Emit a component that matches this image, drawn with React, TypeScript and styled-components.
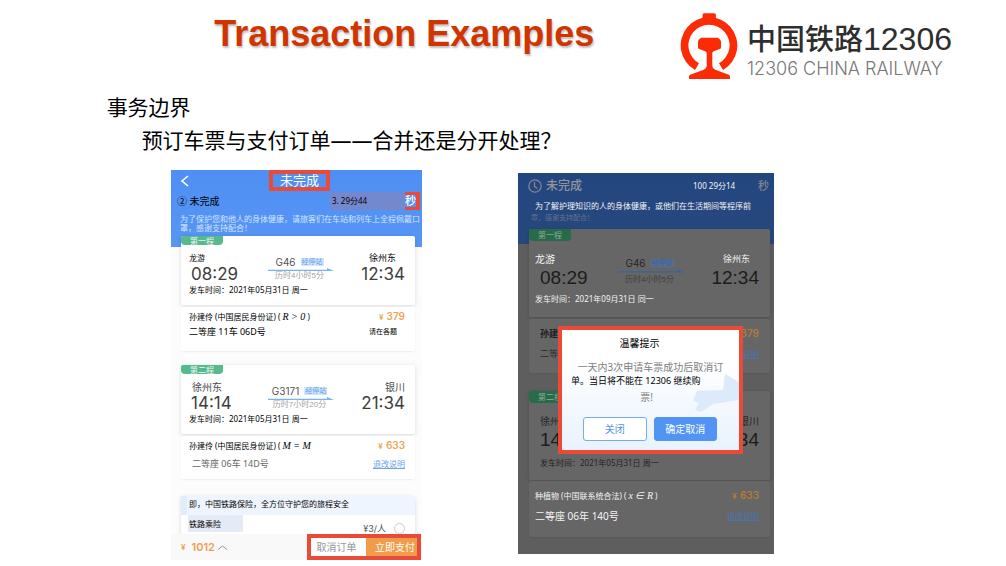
import React from "react";
import styled, { createGlobalStyle, css } from "styled-components";

const UI = `"Noto Sans", "Noto Sans CJK SC", sans-serif`;
const ARIAL = `"Liberation Sans", "Noto Sans CJK SC", sans-serif`;
const WIDE = `Inter, "Noto Sans CJK SC", sans-serif`;
const RED = "#e94b38";

const GlobalStyle = createGlobalStyle`
  *, *::before, *::after { box-sizing: border-box; }
  body { margin: 0; background: #fff; color: #000; font-family: ${UI}; }
  h1, h2, p, figure { margin: 0; font-size: inherit; font-weight: 400; }
  button { margin: 0; padding: 0; border: 0; background: none; font: inherit; color: inherit; white-space: nowrap; cursor: pointer; }
`;

/* ---------- slide ---------- */

const Slide = styled.main`
  width: 100%;
  overflow: hidden;
`;

const Header = styled.header`
  display: grid;
  grid-template-columns: minmax(0, 680fr) minmax(0, 326fr);
  align-items: start;
  padding-top: 12px;
`;

const Title = styled.h1`
  && { font-size: 36px; font-weight: 700; }
  padding-left: 31.5%;
  font-family: ${ARIAL};
  line-height: 44px;
  color: #d03400;
  text-shadow: 1px 2px 2px rgba(0, 0, 0, 0.25);
  white-space: nowrap;
`;

const Logo = styled.div`
  display: flex;
  gap: 9px;
`;

const LogoText = styled.div`
  padding-top: 6px;
  white-space: nowrap;
`;

const LogoName = styled.div`
  display: flex;
  align-items: baseline;
  font-family: ${ARIAL};
  font-size: 32px;
  line-height: 38px;
  color: #2e2e2e;
`;

const LogoHan = styled.span`
  font-family: "Noto Sans CJK SC", sans-serif;
  font-size: 29px;
  font-weight: 500;
`;

const LogoSub = styled.div`
  font-family: ${WIDE};
  font-size: 18px;
  font-weight: 300;
  line-height: 22px;
  color: #777;
`;

const Topic = styled.section`
  padding: 11px 0 0 10.6%;
  font-size: 21px;
  line-height: 33px;
`;

const SubTopic = styled.p`
  padding-left: 35px;
`;

const Figures = styled.section`
  display: grid;
  grid-template-columns: minmax(0, 171fr) minmax(0, 251fr) minmax(0, 96fr) minmax(0, 256fr) minmax(0, 232fr);
  align-items: start;
  padding-top: 13px;
`;

/* ---------- phone ---------- */

const Phone = styled.figure<{ $dim?: boolean }>`
  position: relative;
  grid-column: ${(p) => (p.$dim ? 4 : 2)};
  && { font-size: 8px; }
  white-space: nowrap;
  ${(p) =>
    p.$dim
      ? css`
          && { margin-top: 3px; }
          padding-bottom: 17px;
          color: #f4f4f4;
          background: linear-gradient(#24467f 0, #27487e 71px, #5e5e5e 71px);
        `
      : css`
          background: linear-gradient(#4f8ff3 0, #5796f4 77px, #fcfcfc 77px);
        `}
`;

const NavBar = styled.div`
  display: grid;
  grid-template-columns: 98px auto 1fr;
  align-items: center;
  color: #fff;
`;

const BackButton = styled.button`
  && { padding-left: 9px; }
  display: flex;
`;

const NavTitle = styled.div`
  padding: 0 7px;
  border: 4px solid ${RED};
  font-size: 13px;
  line-height: 13px;
`;

const StatusRow = styled.div<{ $dim?: boolean }>`
  display: flex;
  align-items: center;
  line-height: 18px;
  padding: ${(p) => (p.$dim ? "4px 5px 0 10px" : "1px 2px 0 6px")};
`;

const StatusName = styled.span<{ $dim?: boolean }>`
  flex: 1;
  display: flex;
  align-items: center;
  gap: 4px;
  font-size: ${(p) => (p.$dim ? 12 : 10)}px;
  font-weight: ${(p) => (p.$dim ? 500 : 400)};
  color: ${(p) => (p.$dim ? "#92959b" : "#000")};
`;

const Timer = styled.span<{ $dim?: boolean }>`
  width: 75px;
  padding-left: ${(p) => (p.$dim ? 10 : 2)}px;
  background: ${(p) => (p.$dim ? "none" : "#7388cd")};
`;

const Second = styled.span<{ $dim?: boolean }>`
  font-size: 11px;
  font-weight: 500;
  ${(p) =>
    p.$dim
      ? css`color: #81858d;`
      : css`
          border: solid ${RED};
          border-width: 3px 4px 3px 0;
          line-height: 12px;
          color: #fff;
        `}
`;

const Notice = styled.p`
  && { margin: 4px 0; }
  padding-left: 9px;
  line-height: 9px;
  color: #d3e4fd;
`;

const DimNotice = styled.p`
  padding: 5px 0 0 17px;
  line-height: 12px;
`;

const DimNoticeRest = styled.p`
  && { margin-bottom: 6px; font-size: 7px; }
  padding-left: 13px;
  line-height: 11px;
  color: #62718e;
`;

const Card = styled.section<{ $dim?: boolean; $top?: number }>`
  margin: ${(p) => p.$top ?? 0}px ${(p) => (p.$dim ? "4px 0 11px" : "7px 0 10px")};
  border-radius: 2px;
  background: ${(p) => (p.$dim ? "#666" : "#fff")};
  box-shadow: 0 1px 4px ${(p) => (p.$dim ? "rgba(0,0,0,.18)" : "rgba(0,0,0,.14)")};
`;

const Badge = styled.div<{ $dim?: boolean }>`
  width: 42px;
  border-radius: 2px 0 4px 4px;
  text-align: center;
  line-height: ${(p) => (p.$dim ? 12 : 9)}px;
  background: ${(p) => (p.$dim ? "#286b49" : "#57b98d")};
  color: ${(p) => (p.$dim ? "#8fa79b" : "#eefaf4")};
`;

const Route = styled.div<{ $dim?: boolean }>`
  display: grid;
  grid-template-columns: 1fr auto 1fr;
  padding: ${(p) => (p.$dim ? "12px 11px 0 6px" : "7px 10px 0 8px")};
`;

const Stop = styled.div<{ $end?: boolean }>`
  grid-column: ${(p) => (p.$end ? 3 : 1)};
  text-align: ${(p) => (p.$end ? "right" : "left")};
`;

const Station = styled.div<{ $size: number; $color?: string; $inset?: number; $end?: boolean }>`
  padding: 0 ${(p) => (p.$end ? p.$inset ?? 0 : 0)}px 0 ${(p) => (p.$end ? 0 : p.$inset ?? 0)}px;
  font-size: ${(p) => p.$size}px;
  line-height: 12px;
  color: ${(p) => p.$color ?? "inherit"};
`;

const Time = styled.time<{ $dim?: boolean; $end?: boolean }>`
  display: block;
  ${(p) =>
    p.$dim
      ? css`
          padding: 2px 0 0 ${p.$end ? 0 : 5}px;
          font-family: ${ARIAL};
          font-size: 19px;
          line-height: 22px;
          color: #1c1c1c;
        `
      : css`
          padding-left: ${p.$end ? 0 : 2}px;
          font-family: ${WIDE};
          font-size: 17px;
          line-height: 20px;
          color: #3e3e3e;
        `}
`;

const Train = styled.div`
  padding: 4px 0 0 5px;
  text-align: center;
`;

const TrainNo = styled.div<{ $dim?: boolean }>`
  display: flex;
  align-items: center;
  justify-content: center;
  gap: 5px;
  font-family: ${WIDE};
  font-size: 10px;
  line-height: 12px;
  color: ${(p) => (p.$dim ? "#262626" : "#555")};
`;

const Via = styled.a<{ $dim?: boolean }>`
  padding: 0 1px;
  font-size: 7px;
  line-height: 8px;
  text-decoration: none;
  color: ${(p) => (p.$dim ? "#2f62ad" : "#5c9de9")};
  background: ${(p) => (p.$dim ? "#5b6f8c" : "#d3e7fb")};
`;

const Arrow = styled.svg`
  display: block;
  margin-left: 3px;
`;

const Duration = styled.div<{ $dim?: boolean }>`
  font-family: ${ARIAL};
  line-height: ${(p) => (p.$dim ? 14 : 10)}px;
  color: ${(p) => (p.$dim ? "#404040" : "#a3a3a3")};
`;

const Departure = styled.p<{ $dim?: boolean; $dark?: boolean }>`
  line-height: 12px;
  padding: ${(p) => (p.$dim ? (p.$dark ? "6px 0 11px 11px" : "4px 0 12px 6px") : "0 0 9px 8px")};
  color: ${(p) => (p.$dark ? "#232323" : "inherit")};
`;

const Passenger = styled(Card)<{ $gap: number; $bottom: number }>`
  display: grid;
  row-gap: ${(p) => p.$gap}px;
  padding: ${(p) => (p.$dim ? 7 : 3)}px ${(p) => (p.$dim ? 11 : 10)}px ${(p) => p.$bottom}px ${(p) => (p.$dim ? 6 : 8)}px;
  box-shadow: 0 1px 2px rgba(0, 0, 0, 0.06);
`;

const Line = styled.div<{ $dim?: boolean }>`
  display: flex;
  align-items: center;
  justify-content: space-between;
  line-height: ${(p) => (p.$dim ? 14 : 12)}px;
`;

const Label = styled.span<{ $size?: number; $color?: string; $inset?: number; $bold?: boolean }>`
  padding: 0 ${(p) => p.$inset ?? 0}px;
  font-size: ${(p) => p.$size ?? 8}px;
  font-weight: ${(p) => (p.$bold ? 700 : 400)};
  color: ${(p) => p.$color ?? "inherit"};
`;

const Formula = styled.i`
  font-family: "Liberation Serif", serif;
  font-size: 10px;
`;

const Price = styled.span<{ $dim?: boolean }>`
  font-family: ${WIDE};
  font-size: 10px;
  font-weight: 600;
  color: ${(p) => (p.$dim ? "#b37d38" : "#f0a457")};
`;

const Yen = styled.span`
  margin-right: 3px;
  font-size: 8px;
`;

const RuleLink = styled.a<{ $dim?: boolean }>`
  color: ${(p) => (p.$dim ? "#4874b4" : "#6ba3ec")};
`;

const InsuranceHead = styled.p`
  padding: 0 0 4px 2px;
  border-left: 6px solid #e0edfd;
  line-height: 15px;
  background: #eff5fe;
`;

const InsuranceRow = styled.label`
  display: flex;
  align-items: flex-end;
  min-height: 19px;
  padding: 0 10px 0 7px;
`;

const InsuranceName = styled.span`
  align-self: flex-start;
  width: 55px;
  margin-right: auto;
  padding-left: 1px;
  line-height: 17px;
  background: #e5ebf6;
`;

const InsurancePrice = styled.span`
  margin-right: 8px;
  font-family: ${WIDE};
  font-size: 9px;
  line-height: 10px;
  color: #555;
`;

const Round = styled.input`
  appearance: none;
  width: 11px;
  height: 11px;
  margin: 0;
  border: 1px solid #ccc;
  border-radius: 50%;
`;

const PayBar = styled.div`
  position: relative;
  display: flex;
  align-items: center;
  padding: 0 1px 0 10px;
  background: #f9f9f9;
`;

const Total = styled.span`
  display: flex;
  align-items: center;
  gap: 3px;
  margin-right: auto;
  font-family: ${WIDE};
  font-size: 11px;
  font-weight: 600;
  color: #f0a050;
`;

const Actions = styled.div`
  display: flex;
  width: 114px;
  border: 4px solid ${RED};
  font-size: 10px;
`;

const CancelButton = styled.button`
  && { padding-right: 4px; line-height: 18px; color: #999; background: #fdfdfd; }
  flex: 1;
`;

const PayButton = styled.button`
  && { padding-left: 7px; line-height: 18px; color: #fff; background: #f09c4a; }
  width: 51px;
`;

/* ---------- dialog over the dimmed phone ---------- */

const Dialog = styled.div`
  position: absolute;
  top: 153px;
  left: 40px;
  right: 31px;
  padding: 6px 9px 9px;
  border: 4px solid ${RED};
  background: linear-gradient(#fff 25%, #e9f2fd);
  color: #808080;
  font-size: 10px;
  text-align: center;
`;

const DialogTitle = styled.h2`
  && { margin-bottom: 10px; }
  padding-right: 22px;
  line-height: 14px;
  color: #000;
`;

const DialogText = styled.p<{ $right?: number }>`
  padding-right: ${(p) => p.$right ?? 0}px;
  line-height: 14px;
`;

const DialogStrong = styled.p`
  && { margin-bottom: 3px; font-size: 9px; }
  line-height: 13px;
  text-align: left;
  color: #000;
`;

const DialogButtons = styled.div`
  display: flex;
  justify-content: center;
  gap: 7px;
  padding: 13px 13px 0 12px;
`;

const DialogButton = styled.button<{ $primary?: boolean }>`
  && {
    flex: 1;
    border: 1px solid ${(p) => (p.$primary ? "#5294f4" : "#78acf0")};
    border-radius: 3px;
    line-height: 22px;
    color: ${(p) => (p.$primary ? "#fff" : "#5294e8")};
    background: ${(p) => (p.$primary ? "#5294f4" : "#fff")};
  }
`;

const TrainArt = styled.svg`
  position: absolute;
  right: -9px;
  bottom: 29px;
  z-index: -1;
`;

const DialogLayer = styled.div`
  position: relative;
  z-index: 0;
`;

function RailMark() {
  return (
    <svg width="58" height="67" viewBox="0 0 58 67" aria-hidden="true">
      <g fill="#fa2b05">
        <path d="M22.500 7V3q0-1.700 1.700-1.700h10q1.700 0 1.700 1.700v4z" />
        <path d="M15 58A28.300 28.300 0 1 1 43 58L39 51.300A20.600 20.600 0 1 0 19 51.300z" />
        <path d="M21 25.700h17q3 2 3 3.800v6q0 1.200-1.200 1.600l-6 2.200q-1.500.6-1.500 2V54q0 2.500 3 3.700l13.500 5.100q1.200.5 1.200 2V67H9v-2.200q0-1.500 1.200-2l13.500-5.100q3-1.200 3-3.700V41.300q0-1.400-1.500-2l-6-2.200q-1.200-.4-1.200-1.600v-6q0-1.800 3-3.800z" />
      </g>
    </svg>
  );
}

function LineArrow({ dim }: { dim?: boolean }) {
  return (
    <Arrow width="66" height={dim ? 4 : 3} viewBox="0 0 66 3" aria-hidden="true">
      <path d="M0 1.700H59V0L66 3H0z" fill={dim ? "#3763a3" : "#7ab1f3"} />
    </Arrow>
  );
}

interface LegProps {
  dim?: boolean;
  top?: number;
  badge: string;
  from: React.ReactNode;
  to: React.ReactNode;
  start: string;
  end: string;
  train?: string;
  duration?: string;
  departure: string;
  darkDeparture?: boolean;
}

function Leg(p: LegProps) {
  return (
    <Card $dim={p.dim} $top={p.top}>
      <Badge $dim={p.dim}>{p.badge}</Badge>
      <Route $dim={p.dim}>
        <Stop>
          {p.from}
          <Time $dim={p.dim}>{p.start}</Time>
        </Stop>
        {p.train && (
          <Train>
            <TrainNo $dim={p.dim}>
              {p.train}
              <Via href="#stops" $dim={p.dim}>经停站</Via>
            </TrainNo>
            <LineArrow dim={p.dim} />
            <Duration $dim={p.dim}>{p.duration}</Duration>
          </Train>
        )}
        <Stop $end>
          {p.to}
          <Time $dim={p.dim} $end>{p.end}</Time>
        </Stop>
      </Route>
      <Departure $dim={p.dim} $dark={p.darkDeparture}>{p.departure}</Departure>
    </Card>
  );
}

function Fare({ amount, dim }: { amount: string; dim?: boolean }) {
  return (
    <Price $dim={dim}>
      <Yen>¥</Yen>
      {amount}
    </Price>
  );
}

function OrderPhone() {
  return (
    <Phone>
      <NavBar>
        <BackButton aria-label="返回">
          <svg width="9" height="12" viewBox="0 0 9 12" fill="none" stroke="#fff" strokeWidth="1.600">
            <path d="M8 1 2 6l6 5" />
          </svg>
        </BackButton>
        <NavTitle>未完成</NavTitle>
      </NavBar>
      <StatusRow>
        <StatusName>② 未完成</StatusName>
        <Timer>3. 29分44</Timer>
        <Second>秒</Second>
      </StatusRow>
      <Notice>
        为了保护您和他人的身体健康，请旅客们在车站和列车上全程佩戴口
        <br />
        罩，感谢支持配合！
      </Notice>
      <Leg
        badge="第一程"
        from={<Station $size={8}>龙游</Station>}
        to={<Station $size={9} $end $inset={9}>徐州东</Station>}
        start="08:29"
        end="12:34"
        train="G46"
        duration="历时4小时5分"
        departure="发车时间：2021年05月31日 周一"
      />
      <Passenger $top={2} $gap={3} $bottom={13}>
        <Line>
          <Label>孙建伶 (中国居民身份证) ( <Formula>R &gt; 0</Formula> )</Label>
          <Fare amount="379" />
        </Line>
        <Line>
          <Label $size={9}>二等座 11车 06D号</Label>
          <Label $size={7} $inset={8}>请在各题</Label>
        </Line>
      </Passenger>
      <Leg
        top={14}
        badge="第二程"
        from={<Station $size={10} $color="#4a4a4a" $inset={3}>徐州东</Station>}
        to={<Station $size={10} $color="#4a4a4a" $end>银川</Station>}
        start="14:14"
        end="21:34"
        train="G3171"
        duration="历时7小时20分"
        departure="发车时间：2021年05月31日 周一"
      />
      <Passenger $top={2} $gap={6} $bottom={9}>
        <Line>
          <Label>孙建伶 (中国居民身份证) ( <Formula>M = M</Formula></Label>
          <Fare amount="633" />
        </Line>
        <Line>
          <Label $size={9} $color="#666" $inset={3}>二等座 06车 14D号</Label>
          <RuleLink href="#rules">退改说明</RuleLink>
        </Line>
      </Passenger>
      <Card $top={17}>
        <InsuranceHead>即，中国铁路保险，全方位守护您的旅程安全</InsuranceHead>
        <InsuranceRow>
          <InsuranceName>铁路乘险</InsuranceName>
          <InsurancePrice>¥3/人</InsurancePrice>
          <Round type="radio" name="insurance" />
        </InsuranceRow>
      </Card>
      <PayBar>
        <Total>
          <Yen>¥</Yen>1012
          <svg width="9" height="5" viewBox="0 0 9 5" fill="none" stroke="#999">
            <path d="M0 4.500 4.500 1 9 4.500" />
          </svg>
        </Total>
        <Actions>
          <CancelButton>取消订单</CancelButton>
          <PayButton>立即支付</PayButton>
        </Actions>
      </PayBar>
    </Phone>
  );
}

function ConfirmPhone() {
  return (
    <Phone $dim>
      <StatusRow $dim>
        <StatusName $dim>
          <svg width="14" height="14" viewBox="0 0 14 14" fill="none" stroke="#858990" strokeWidth="1.200">
            <circle cx="7" cy="7" r="6.200" />
            <path d="M6.500 3v4.500l3 2" />
          </svg>
          未完成
        </StatusName>
        <Timer $dim>100 29分14</Timer>
        <Second $dim>秒</Second>
      </StatusRow>
      <DimNotice>为了解护理知识的人的身体健康，或他们在生活期间等程序前</DimNotice>
      <DimNoticeRest>章，感谢支持配合！</DimNoticeRest>
      <Leg
        dim
        badge="第一程"
        from={<Station $size={10}>龙游</Station>}
        to={<Station $size={9} $end $inset={9}>徐州东</Station>}
        start="08:29"
        end="12:34"
        train="G46"
        duration="历时4小时5分"
        departure="发车时间：2021年09月31日 同一"
      />
      <Passenger $dim $top={2} $gap={6} $bottom={12}>
        <Line $dim>
          <Label $size={9} $color="#1d1d1d" $inset={5} $bold>孙建</Label>
          <Fare dim amount="379" />
        </Line>
        <Line $dim>
          <Label $size={9} $color="#2c2c2c" $inset={5}>二等</Label>
          <RuleLink $dim href="#rules">退改说明</RuleLink>
        </Line>
      </Passenger>
      <Leg
        dim
        top={18}
        badge="第二程"
        from={<Station $size={10} $color="#262626" $inset={5}>徐州东</Station>}
        to={<Station $size={10} $color="#262626" $end>银川</Station>}
        start="14:14"
        end="21:34"
        departure="发车时间：2021年05月31日 周一"
        darkDeparture
      />
      <Passenger $dim $top={1} $gap={6} $bottom={14}>
        <Line $dim>
          <Label>种植物 (中国联系统合法) ( <Formula>x ∈ R</Formula> )</Label>
          <Fare dim amount="633" />
        </Line>
        <Line $dim>
          <Label $size={10}>二等座 06年 140号</Label>
          <RuleLink $dim href="#rules">退改说明</RuleLink>
        </Line>
      </Passenger>
      <Dialog role="dialog" aria-labelledby="tip-title">
        <DialogLayer>
          <DialogTitle id="tip-title">温馨提示</DialogTitle>
          <DialogText>一天内3次申请车票成功后取消订</DialogText>
          <DialogStrong>单。当日将不能在 12306 继续购</DialogStrong>
          <DialogText $right={8}>票!</DialogText>
          <DialogButtons>
            <DialogButton>关闭</DialogButton>
            <DialogButton $primary>确定取消</DialogButton>
          </DialogButtons>
          <TrainArt width="46" height="38" viewBox="0 0 46 38" aria-hidden="true">
            <path d="M32 0 46 8V26L20 30 8 38 2 36 6 29 0 27 4 17 30 16z" fill="#dceafb" />
          </TrainArt>
        </DialogLayer>
      </Dialog>
    </Phone>
  );
}

export default function App() {
  return (
    <Slide>
      <GlobalStyle />
      <Header>
        <Title>Transaction Examples</Title>
        <Logo>
          <RailMark />
          <LogoText>
            <LogoName>
              <LogoHan>中国铁路</LogoHan>12306
            </LogoName>
            <LogoSub>12306 CHINA RAILWAY</LogoSub>
          </LogoText>
        </Logo>
      </Header>
      <Topic>
        <h2>事务边界</h2>
        <SubTopic>预订车票与支付订单——合并还是分开处理？</SubTopic>
      </Topic>
      <Figures>
        <OrderPhone />
        <ConfirmPhone />
      </Figures>
    </Slide>
  );
}
